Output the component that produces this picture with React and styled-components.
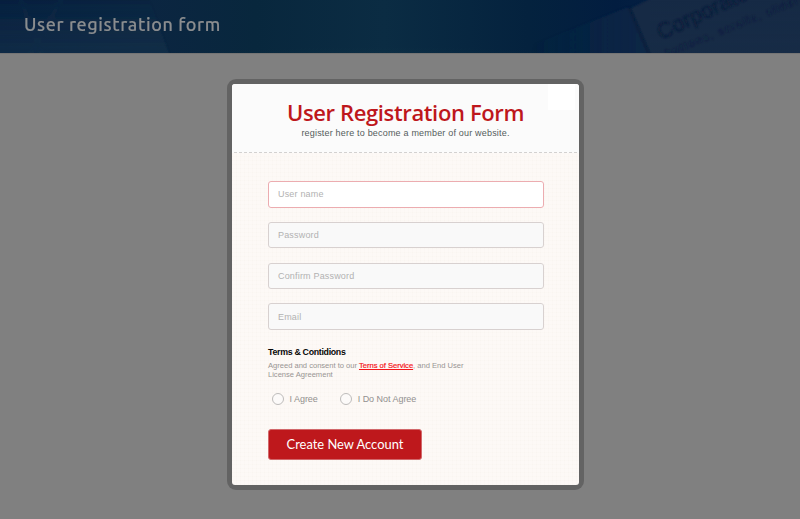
import React from 'react';
import styled, { createGlobalStyle } from 'styled-components';

const Global = createGlobalStyle`
  * { box-sizing: border-box; }
  body { margin: 0; background: #808080; overflow: hidden; }
`;

const Page = styled.div`
  width: 800px;
  height: 519px;
  background: #808080;
  font-family: 'Liberation Sans', Arial, sans-serif;
`;

const Banner = styled.header`
  position: relative;
  height: 53px;
  padding: 12px 24px 0;
  overflow: hidden;
  background: #06223f;
  box-shadow: 0 1px 0 #747474;
`;

const BannerArt = styled.svg`
  position: absolute;
  inset: 0;
`;

const BannerTitle = styled.h1`
  position: relative;
  margin: 0;
  font: 500 18px/24px Ubuntu, 'Noto Sans', sans-serif;
  letter-spacing: 0.6px;
  -webkit-text-stroke: 0.15px #8b8d8f;
  color: #8b8d8f;
  white-space: nowrap;
`;

const Stage = styled.main`
  padding: 26px 0 0 227px;
`;

const Card = styled.section`
  width: 357px;
  height: 411px;
  padding: 5px;
  border-radius: 9px;
  background: #636363;
`;

const Sheet = styled.div`
  height: 401px;
  width: 347px;
  border-radius: 3px;
  overflow: hidden;
  background-color: #fdf9f6;
  background-image:
    linear-gradient(90deg, rgba(150, 110, 80, 0.01) 1px, transparent 1px),
    linear-gradient(rgba(150, 110, 80, 0.01) 1px, transparent 1px);
  background-size: 4px 4px;
`;

const CardHead = styled.div`
  position: relative;
  height: 69px;
  padding-top: 13px;
  text-align: center;
  background: repeating-linear-gradient(90deg, #d3d1d0 0 3px, transparent 3px 5px) 2px 100% / 343px 1px no-repeat #fbfbfb;
`;

const CloseSlot = styled.span`
  position: absolute;
  top: 0;
  right: 4px;
  width: 27px;
  height: 26px;
  background: #fff;
`;

const Title = styled.h2`
  margin: 0;
  font: 600 22px/30px 'Open Sans', sans-serif;
  letter-spacing: -0.37px;
  color: #be171c;
  white-space: nowrap;
`;

const Subtitle = styled.p`
  margin: 0;
  font-size: 9px;
  line-height: 12px;
  letter-spacing: 0.19px;
  color: #555b5b;
`;

const Form = styled.form`
  display: flex;
  flex-direction: column;
  align-items: flex-start;
  padding: 28px 35px 0 36px;
`;

const Fields = styled.div`
  display: grid;
  gap: 14.3px;
  width: 276px;
`;

const Field = styled.input`
  width: 276px;
  height: 26.5px;
  padding: 0.2px 9px 0;
  border: 1px solid ${(p) => (p.$active ? '#ecacb0' : '#d8d1d0')};
  border-radius: 3px;
  outline: 0;
  background: ${(p) => (p.$active ? '#fff' : '#f9f9f9')};
  font: 9px 'Liberation Sans', Arial, sans-serif;
  letter-spacing: 0.18px;
  &::placeholder { color: #b2b2b2; opacity: 1; }
`;

const TermsTitle = styled.h3`
  margin: 16px 0 0;
  font-size: 8.8px;
  line-height: 13px;
  letter-spacing: -0.3px;
  color: #080808;
`;

const TermsText = styled.p`
  margin: 2px 0 0;
  font-size: 7.6px;
  line-height: 9px;
  letter-spacing: -0.02px;
  color: #999593;
  white-space: nowrap;
`;

const TermsLink = styled.a`
  color: #f5161a;
  -webkit-text-stroke: 0.2px #f5161a;
  text-decoration: underline;
`;

const Choices = styled.div`
  display: flex;
  gap: 22.4px;
  margin: 14px 0 0 4px;
`;

const Choice = styled.label`
  display: flex;
  align-items: center;
  gap: 5.5px;
  height: 12px;
  font-size: 9px;
  letter-spacing: -0.03px;
  color: #92908f;
  white-space: nowrap;
`;

const Radio = styled.span`
  width: 12px;
  height: 12px;
  border: 1px solid #bebcbb;
  border-radius: 50%;
  background: #fcfaf9;
`;

const Submit = styled.button`
  width: 154px;
  height: 31px;
  margin-top: 24px;
  padding: 0;
  border: 1px solid #d2686b;
  border-radius: 3px;
  background: #be181c;
  color: #fff;
  font: 400 12.9px Lato, sans-serif;
  white-space: nowrap;
`;

const FIELDS = ['User name', 'Password', 'Confirm Password', 'Email'];

export default function App() {
  return (
    <Page>
      <Global />
      <Banner>
        <BannerArt width="800" height="53" viewBox="0 0 800 53">
          <defs>
            <linearGradient id="tone">
              <stop offset="0" stopColor="#07203f" />
              <stop offset="0.18" stopColor="#0b2541" />
              <stop offset="0.32" stopColor="#08273d" />
              <stop offset="0.48" stopColor="#0b2c43" />
              <stop offset="0.66" stopColor="#04223e" />
              <stop offset="0.77" stopColor="#021d40" />
              <stop offset="1" stopColor="#10294b" />
            </linearGradient>
            <radialGradient id="glow" cx="0.48" cy="1.4" r="0.5">
              <stop offset="0" stopColor="#19404c" stopOpacity="0.5" />
              <stop offset="1" stopColor="#19404c" stopOpacity="0" />
            </radialGradient>
            <linearGradient id="fade" x2="0" y2="1">
              <stop offset="0" stopColor="#1b3550" stopOpacity="0" />
              <stop offset="1" stopColor="#1f3a50" stopOpacity="0.45" />
            </linearGradient>
            <linearGradient id="wedge">
              <stop offset="0" stopColor="#12304a" stopOpacity="0" />
              <stop offset="1" stopColor="#142c4a" />
            </linearGradient>
            <filter id="soft" filterUnits="userSpaceOnUse" x="-20" y="-20" width="840" height="93">
              <feGaussianBlur stdDeviation="0.9" />
            </filter>
          </defs>
          <rect width="800" height="53" fill="url(#tone)" />
          <rect width="800" height="53" fill="url(#glow)" />
          <g filter="url(#soft)">
            <path d="M-4-4H148L170 57H-4Z" fill="url(#fade)" />
            <path d="M20-2L42 56M62-2L30 56" stroke="#203852" strokeWidth="4" opacity="0.08" />
            <path d="M535 44L628 7L650 57H530Z" fill="url(#wedge)" opacity="0.6" />
            <path d="M631 8L652-2H804V57H652Z" fill="#142945" />
            <path d="M629 8L649 55" stroke="#071d3a" strokeWidth="2" />
          </g>
          <rect x="650" width="150" height="53" fill="url(#fade)" opacity="0.25" />
          <g filter="url(#soft)" fill="#091c39" fontFamily="Liberation Sans, Arial, sans-serif">
            <text transform="translate(661 40) rotate(-25)" fontSize="22">Corporate</text>
            <text transform="translate(667 57) rotate(-22)" fontSize="11.5" letterSpacing="1.4" opacity="0.6">buttons, scrolls, sliders</text>
          </g>
        </BannerArt>
        <BannerTitle>User registration form</BannerTitle>
      </Banner>
      <Stage>
        <Card>
          <Sheet>
            <CardHead>
              <CloseSlot />
              <Title>User Registration Form</Title>
              <Subtitle>register here to become a member of our website.</Subtitle>
            </CardHead>
            <Form>
              <Fields>
                {FIELDS.map((name, i) => (
                  <Field key={name} $active={i === 0} placeholder={name} aria-label={name} />
                ))}
              </Fields>
              <TermsTitle>Terms &amp; Contidions</TermsTitle>
              <TermsText>
                Agreed and consent to our <TermsLink>Terns of Service</TermsLink>, and End User
                <br />
                License Agreement
              </TermsText>
              <Choices>
                <Choice><Radio />I Agree</Choice>
                <Choice><Radio />I Do Not Agree</Choice>
              </Choices>
              <Submit type="button">Create New Account</Submit>
            </Form>
          </Sheet>
        </Card>
      </Stage>
    </Page>
  );
}
